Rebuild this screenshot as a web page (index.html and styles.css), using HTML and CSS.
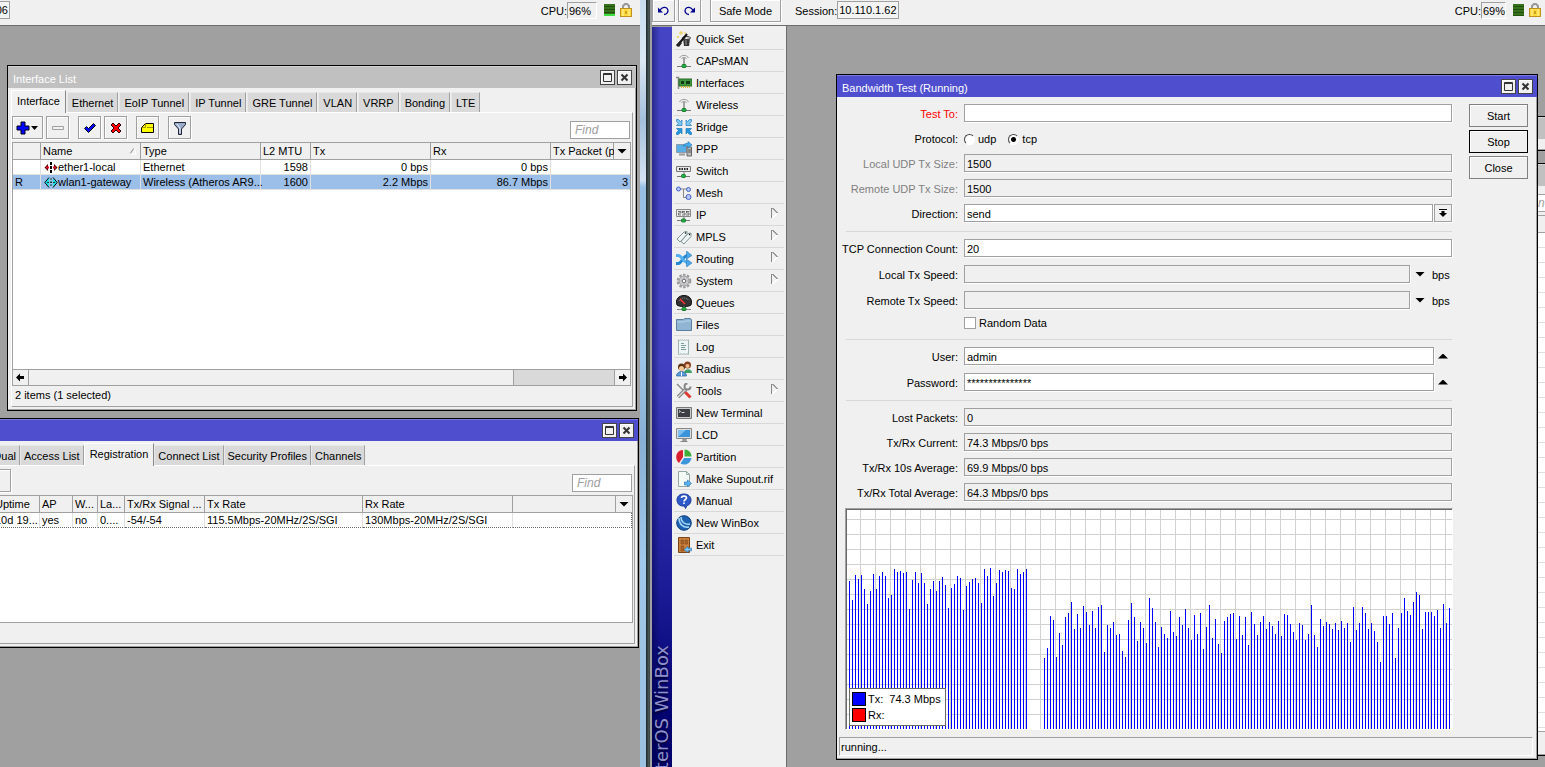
FILE: index.html
```html
<!DOCTYPE html>
<html lang="en">
<head>
    <meta charset="UTF-8">
    <meta name="viewport" content="width=device-width, initial-scale=1.0">
    <title>RouterOS WinBox</title>
    <link rel="stylesheet" href="styles.css">
</head>
<body>

    <div class="screen">

        <!-- left WinBox -->
        <section class="app">
            <header class="topbar">
                <input class="session session-cut" type="text" value="06" aria-label="Session" readonly>
                <div class="status">
                    <span>CPU:</span><span class="cpu">96%</span>
                    <span class="meter low"></span>
                    <svg class="lock" viewBox="0 0 12 14"><path d="M3 7V3l2-2h2l2 2v4" fill="none" stroke="#999" stroke-width="2"/><rect x="0.5" y="5.5" width="11" height="8" fill="#ffd83c" stroke="#c09020"/><path d="M3 6v7M9 6v7" stroke="#fff3a0"/><path d="M6 8v3" stroke="#9a6a10"/></svg>
                </div>
            </header>
            <main class="desktop">
                <div class="window interfaces inactive">
                    <div class="title"><span>Interface List</span>
                        <button class="winbtn" aria-label="Maximize"><svg viewBox="0 0 11 11"><path d="M1.5 1.5h8v8h-8zM1 2.5h9" fill="none" stroke="#333"/></svg></button>
                        <button class="winbtn" aria-label="Close"><svg viewBox="0 0 11 11"><path d="M2.500 2.500l6 6M8.500 2.500l-6 6" stroke="#333" stroke-width="2"/></svg></button>
                    </div>
                    <div class="body">
                        <nav class="tabs">
                            <button class="tab active">Interface</button>
                            <button class="tab">Ethernet</button>
                            <button class="tab">EoIP Tunnel</button>
                            <button class="tab">IP Tunnel</button>
                            <button class="tab">GRE Tunnel</button>
                            <button class="tab">VLAN</button>
                            <button class="tab">VRRP</button>
                            <button class="tab">Bonding</button>
                            <button class="tab">LTE</button>
                        </nav>
                        <div class="panel">
                            <div class="toolbar">
                                <button class="tool add" aria-label="Add"><svg width="24" height="14" viewBox="0 0 24 14"><path d="M5 1h4v4h4v4H9v4H5V9H1V5h4z" fill="#00f" stroke="#001"/><path d="M15 5h7l-3.500 4z"/></svg></button>
                                <button class="tool" aria-label="Remove"><svg width="14" height="14" viewBox="0 0 14 14"><path d="M1.500 5.500h11v3h-11z" fill="#f0f0f0" stroke="#a0a0a0"/></svg></button>
                                <button class="tool spaced" aria-label="Enable"><svg width="14" height="14" viewBox="0 0 14 14"><path d="M1.500 7.500l2-2 2 2 5-5 2 2-7 7z" fill="#00f" stroke="#001"/></svg></button>
                                <button class="tool" aria-label="Disable"><svg width="14" height="14" viewBox="0 0 14 14"><path d="M2 4l2-2 3 3 3-3 2 2-3 3 3 3-2 2-3-3-3 3-2-2 3-3z" fill="#f00" stroke="#300"/></svg></button>
                                <button class="tool spaced" aria-label="Comment"><svg width="14" height="14" viewBox="0 0 14 14"><path d="M4.500 2.500h8v9h-12v-5z" fill="#ff0" stroke="#000"/><path d="M.5 6.500h4v-4M6 6.500h6" fill="none" stroke="#a09000"/></svg></button>
                                <button class="tool spaced" aria-label="Filter"><svg width="14" height="14" viewBox="0 0 14 14"><path d="M1.500 1.500h11v2L8.500 8v5.500h-3V8l-4-4.500z" fill="#9aaccc" stroke="#223"/><path d="M4 3l3 4v5" fill="none" stroke="#e8f0ff"/></svg></button>
                                <input class="find" type="text" placeholder="Find" aria-label="Find">
                            </div>
                            <div class="list tall">
                                <table>
                                    <colgroup><col class="w28"><col class="w100"><col class="w120"><col class="w50"><col class="w120"><col class="w120"><col><col class="w16"></colgroup>
                                    <thead>
                                        <tr><th></th><th>Name<svg class="sort" width="8" height="8" viewBox="0 0 8 8"><path d="M1 7l4-6" stroke="#888"/><path d="M5 1l2 6H1" fill="none" stroke="#fff"/></svg></th><th>Type</th><th>L2 MTU</th><th>Tx</th><th>Rx</th><th>Tx Packet (p</th><th class="pick"><span class="down"></span></th></tr>
                                    </thead>
                                    <tbody>
                                        <tr><td></td><td class="name"><svg width="14" height="11" viewBox="0 0 14 11"><path d="M4 2v7L.5 5.500zM10 2v7l3.500-3.500z" fill="#500008"/><path d="M2 5.500h3M9 5.500h3" stroke="#e01020" stroke-width="2"/><path d="M7 0v11" stroke="#000" stroke-width="2" stroke-dasharray="3 1"/></svg>ether1-local</td><td>Ethernet</td><td class="num">1598</td><td class="num">0 bps</td><td class="num">0 bps</td><td colspan="2"></td></tr>
                                        <tr class="selected"><td>R</td><td class="name"><svg width="14" height="11" viewBox="0 0 14 11"><path d="M5 .5L.8 5.500 5 10.500M9 .5l4.200 5L9 10.500" fill="#20e0e8" stroke="#000"/><path d="M7 1v9M3 5.500h8" stroke="#043" stroke-dasharray="2 1"/></svg>wlan1-gateway</td><td>Wireless (Atheros AR9...</td><td class="num">1600</td><td class="num">2.2 Mbps</td><td class="num">86.7 Mbps</td><td class="num" colspan="2">3</td></tr>
                                    </tbody>
                                </table>
                                <div class="scroll">
                                    <button class="step" aria-label="Scroll left"><svg width="9" height="9" viewBox="0 0 9 9"><path d="M0 4.500L4 .5V3h4v3H4v2.500z"/></svg></button>
                                    <div class="thumb"></div>
                                    <div class="trough"></div>
                                    <button class="step" aria-label="Scroll right"><svg width="9" height="9" viewBox="0 0 9 9"><path d="M9 4.500L5 .5V3H1v3h4v2.500z"/></svg></button>
                                </div>
                            </div>
                            <div class="count">2 items (1 selected)</div>
                        </div>
                    </div>
                </div>

                <div class="window wireless">
                    <div class="title"><span></span>
                        <button class="winbtn" aria-label="Maximize"><svg viewBox="0 0 11 11"><path d="M1.5 1.5h8v8h-8zM1 2.5h9" fill="none" stroke="#333"/></svg></button>
                        <button class="winbtn" aria-label="Close"><svg viewBox="0 0 11 11"><path d="M2.500 2.500l6 6M8.500 2.500l-6 6" stroke="#333" stroke-width="2"/></svg></button>
                    </div>
                    <div class="body">
                        <nav class="tabs">
                            <button class="tab first">Nstreme Dual</button>
                            <button class="tab">Access List</button>
                            <button class="tab active">Registration</button>
                            <button class="tab">Connect List</button>
                            <button class="tab">Security Profiles</button>
                            <button class="tab">Channels</button>
                        </nav>
                        <div class="panel">
                            <div class="toolbar">
                                <button class="tool reset" aria-label="Reset"></button>
                                <input class="find" type="text" placeholder="Find" aria-label="Find">
                            </div>
                            <div class="list short">
                                <table>
                                    <colgroup><col class="w57"><col class="w47"><col class="w33"><col class="w25"><col class="w27"><col class="w80"><col class="w158"><col class="w150"><col><col class="w16"></colgroup>
                                    <thead>
                                        <tr><th></th><th>Uptime</th><th>AP</th><th>W...</th><th>La...</th><th>Tx/Rx Signal ...</th><th>Tx Rate</th><th>Rx Rate</th><th></th><th class="pick"><span class="down"></span></th></tr>
                                    </thead>
                                    <tbody>
                                        <tr class="focused"><td></td><td>10d 19...</td><td>yes</td><td>no</td><td>0....</td><td>-54/-54</td><td>115.5Mbps-20MHz/2S/SGI</td><td>130Mbps-20MHz/2S/SGI</td><td colspan="2"></td></tr>
                                    </tbody>
                                </table>
                            </div>
                            <div class="count"></div>
                        </div>
                    </div>
                </div>
            </main>
        </section>

        <div class="frame"></div>

        <!-- right WinBox -->
        <section class="app">
            <header class="topbar main">
                <button class="tool" aria-label="Undo"><svg width="13" height="12" viewBox="0 0 13 12"><path d="M3 5C5 2 9 1.500 10.500 4S10 9.500 7 9.500" fill="none" stroke="#000090" stroke-width="1.300"/><path d="M1 2.500v5h5z" fill="#000090"/></svg></button>
                <button class="tool" aria-label="Redo"><svg width="13" height="12" viewBox="0 0 13 12"><path d="M10 5C8 2 4 1.500 2.500 4S3 9.500 6 9.500" fill="none" stroke="#000090" stroke-width="1.300"/><path d="M12 2.500v5H7z" fill="#000090"/></svg></button>
                <button class="tool safe">Safe Mode</button>
                <label for="session">Session:</label>
                <input class="session" id="session" type="text" value="10.110.1.62" readonly>
                <div class="status">
                    <span>CPU:</span><span class="cpu">69%</span>
                    <span class="meter"></span>
                    <svg class="lock" viewBox="0 0 12 14"><path d="M3 7V3l2-2h2l2 2v4" fill="none" stroke="#999" stroke-width="2"/><rect x="0.5" y="5.5" width="11" height="8" fill="#ffd83c" stroke="#c09020"/><path d="M3 6v7M9 6v7" stroke="#fff3a0"/><path d="M6 8v3" stroke="#9a6a10"/></svg>
                </div>
            </header>
            <div class="workspace">
                <div class="brand"><span>RouterOS WinBox</span></div>
                <nav class="menu">
                    <a href="#"><svg viewBox="0 0 16 16"><path d="M7 7h7l-1 8H8z" fill="#333"/><ellipse cx="10.500" cy="7" rx="4" ry="1.500" fill="#ddd" stroke="#333"/><path d="M1 15l10-12" stroke="#111" stroke-width="2"/><path d="M0 14l4-4 2 2-3 4z" fill="#222"/><path d="M5 0v4M3 2h4M9 1v2M2 5v2M1 6h2" stroke="#e8c840"/><path d="M10 9v5" stroke="#999"/></svg>Quick Set</a>
                    <a href="#"><svg viewBox="0 0 16 16"><path d="M3.500 5C5 1.500 11 1.500 12.500 5M5.500 6C6 4 10 4 10.500 6" fill="none" stroke="#999"/><path d="M8 5v7" stroke="#888" stroke-width="1.500"/><path d="M1 13.500h14" stroke="#777"/><rect x="6" y="11.500" width="4" height="3" rx="1" fill="#25b045" stroke="#167a2d"/></svg>CAPsMAN</a>
                    <a href="#"><svg viewBox="0 0 16 16"><path d="M0 2.500h2.500V14" fill="none" stroke="#888" stroke-width="1.500"/><path d="M3 4h13v7H3z" fill="#3f9a3f" stroke="#276b28"/><path d="M5 6h3v3H5zM10 6h4v3h-4z" fill="#153a18"/><path d="M5 12h9" stroke="#d8b83c" stroke-width="2" stroke-dasharray="1 1"/></svg>Interfaces</a>
                    <a href="#"><svg viewBox="0 0 16 16"><path d="M3.500 5C5 1.500 11 1.500 12.500 5M5.500 6C6 4 10 4 10.500 6" fill="none" stroke="#999"/><path d="M8 5v7" stroke="#888" stroke-width="1.500"/><path d="M1 13.500h14" stroke="#777"/><rect x="6" y="11.500" width="4" height="3" rx="1" fill="#25b045" stroke="#167a2d"/></svg>Wireless</a>
                    <a href="#"><svg viewBox="0 0 16 16"><g stroke="#1f78b8" stroke-width=".7"><path d="M.5.5l2 0 2 2L6 1v5.500H.5L2.500 4.500l-2-2zM15.500.5v2l-2 2 2 2H10V1l1.500 1.500 2-2z" fill="#7cc8f2"/><path d="M.5 15.500v-2l2-2-2-2H6V15l-1.500-1.500-2 2zM15.500 15.500h-2l-2-2L10 15V9.500h5.500l-2 2 2 2z" fill="#2596dc"/></g></svg>Bridge</a>
                    <a href="#"><svg viewBox="0 0 16 16"><path d="M.5 3.500h10v8H.5z" fill="#5aaee6" stroke="#8a9aaa"/><path d="M3 13.500h6" stroke="#999" stroke-width="2"/><path d="M11 6h4.500v9H11z" fill="#bbb" stroke="#666"/><path d="M12 9h3M12 11h3" stroke="#555"/><path d="M7 5c1-2 3-3 5-2.500V.5l4 3.500-4 3V5z" fill="#49b0f0" stroke="#2072b0" stroke-width=".6"/></svg>PPP</a>
                    <a href="#"><svg viewBox="0 0 16 16"><path d="M.5 3.500h14v5H.5z" fill="#e8e8e8" stroke="#777"/><path d="M3 6h10" stroke="#222" stroke-width="2" stroke-dasharray="1.500 1"/><path d="M8 9v3M1 13.500h13" stroke="#777"/><rect x="5.500" y="11.500" width="4" height="3" rx="1" fill="#25b045" stroke="#167a2d"/></svg>Switch</a>
                    <a href="#"><svg viewBox="0 0 16 16"><path d="M4 4h9M7.500 4v8.500H12" fill="none" stroke="#888"/><g fill="#b8c8ff" stroke="#4060c8"><circle cx="2.500" cy="4" r="2"/><circle cx="12.500" cy="4.500" r="2"/><circle cx="12.500" cy="12" r="2.500"/></g></svg>Mesh</a>
                    <a href="#" class="sub"><svg viewBox="0 0 16 16"><path d="M.5 2.500h14v7H.5z" fill="#eee" stroke="#888"/><path d="M2 4.500h3v1.500H2.500V8H5M6 4.500h3M6.500 4v2H9v2H6M10 4.500h3.500M10.500 4v2H13v2h-3" fill="none" stroke="#555" stroke-width=".8"/><path d="M8 10v3M1 13.500h13" stroke="#777"/><rect x="5.500" y="12" width="4" height="3" rx="1" fill="#25b045" stroke="#167a2d"/></svg>IP</a>
                    <a href="#" class="sub"><svg viewBox="0 0 16 16"><path d="M1 10l7-7 3-.500v3L4 13zM5 12.500l7-8 3-.500v3.500L8 15z" fill="#eef4f4" stroke="#7f9496"/><circle cx="9.500" cy="4" r=".7"/><circle cx="13.500" cy="5.500" r=".7"/></svg>MPLS</a>
                    <a href="#" class="sub"><svg viewBox="0 0 16 16"><path d="M0 12.500h2.500c3 0 5-8 9-8" fill="none" stroke="#2788d0" stroke-width="3"/><path d="M0 4.500h2.500c3 0 5 7 9 7" fill="none" stroke="#52b0ee" stroke-width="3"/><path d="M10.500 0l5.500 4.500L10.500 8zM10.500 8l5.500 4-5.500 4z" fill="#4aa8e8" stroke="#2070b0" stroke-width=".5"/></svg>Routing</a>
                    <a href="#" class="sub"><svg viewBox="0 0 16 16"><circle cx="8" cy="8" r="6.300" fill="none" stroke="#999" stroke-width="2" stroke-dasharray="2.500 1.500"/><circle cx="8" cy="8" r="5" fill="#d0d0d4" stroke="#999"/><path d="M8 4v8M4 8h8M5.500 5.500l5 5M10.500 5.500l-5 5" stroke="#aaa"/><circle cx="8" cy="8" r="1.700" fill="#fff" stroke="#777"/></svg>System</a>
                    <a href="#"><svg viewBox="0 0 16 16"><path d="M1 10C-1 4 3 .5 8 .5S17 4 15 10c-2 2-12 2-14 0z" fill="#333" stroke="#111"/><path d="M3 6c2-4 8-4 10 0" fill="none" stroke="#888" stroke-dasharray="1 1"/><path d="M4 4l5 5" stroke="#f33" stroke-width="1.500"/><path d="M8 11v3M1 14.500h14" stroke="#888"/><rect x="6" y="12.500" width="4" height="3" rx="1" fill="#25b045" stroke="#167a2d"/></svg>Queues</a>
                    <a href="#"><svg viewBox="0 0 16 16"><path d="M.5 13.500v-11h7l1.500-1h5l1.500 1v11z" fill="#8fb4d4" stroke="#5a7f9f"/><path d="M1 5h7l1-1h6" fill="none" stroke="#b8d4ea"/></svg>Files</a>
                    <a href="#"><svg viewBox="0 0 16 16"><path d="M2.500 15.500V.8l1 .7 1-.7 1 .7 1-.7 1 .7 1-.7 1 .7 1-.7 1 .7 1-.7v14.700l-1.500-.8-1.500.8-1.500-.8-1.500.8-1.500-.8-1.500.8z" fill="#eef5f5" stroke="#a0b4b4"/><path d="M5 4.500h3M5 6.500h5M5 8.500h4M5 10.500h5" stroke="#7c9c9c"/></svg>Log</a>
                    <a href="#"><svg viewBox="0 0 16 16"><path d="M8 12c0-5 8-5 8 0z" fill="#3fa068"/><circle cx="11.500" cy="4" r="3.500" fill="#8a4020"/><circle cx="11.500" cy="5" r="2" fill="#f0c090"/><path d="M.5 15c0-6 10-6 10 0z" fill="#5a9ad8" stroke="#2a62a0" stroke-width=".7"/><circle cx="5.500" cy="6" r="3.500" fill="#5a3010"/><circle cx="5.500" cy="7.500" r="2.500" fill="#f4c898"/><path d="M5.500 11v4" stroke="#fff"/></svg>Radius</a>
                    <a href="#" class="sub"><svg viewBox="0 0 16 16"><path d="M1 1l8 8" stroke="#888" stroke-width="1.500"/><path d="M9 9l5.500 5.500" stroke="#e03a30" stroke-width="3"/><path d="M2 14l8-8" stroke="#808080" stroke-width="3.500"/><path d="M2 14l8-8" stroke="#d8d8d8" stroke-width="1.500"/><path d="M14.500 3.500a3 3 0 1 1-3-3" fill="none" stroke="#888" stroke-width="2"/></svg>Tools</a>
                    <a href="#"><svg viewBox="0 0 16 16"><path d="M.5 2.500h15v11H.5z" fill="#ccc" stroke="#777"/><path d="M2 4h12v8H2z" fill="#3c4046"/><path d="M3 5.500l1.500 1L3 7.500M5.500 7.500h3" fill="none" stroke="#fff" stroke-width=".8"/></svg>New Terminal</a>
                    <a href="#"><svg viewBox="0 0 16 16"><path d="M.5 1.500h15v10H.5z" fill="#ddd" stroke="#888"/><path d="M2 3h12v7H2z" fill="#3a92d8"/><path d="M2 3h8l-8 7z" fill="#7cc0f0"/><path d="M7 12h3v2H7zM4.500 14.500h7" fill="#aaa" stroke="#888"/></svg>LCD</a>
                    <a href="#"><svg viewBox="0 0 16 16"><path d="M7 1v7l-4 6C-2 10 0 1 7 1z" fill="#d82030"/><path d="M8.500.5c4 0 7 3 7 7h-7z" fill="#3fae3a"/><path d="M8 9h7.500c-1 6-7 8-11 5.500z" fill="#3c96dc"/></svg>Partition</a>
                    <a href="#"><svg viewBox="0 0 16 16"><path d="M2.500.5h8l3 3v12h-11z" fill="#f4faf6" stroke="#93a8a4"/><path d="M10.500.5v3h3" fill="none" stroke="#93a8a4"/><path d="M8.500 11h3V9l4 3.500-4 3V14h-3z" fill="#5ab4f0" stroke="#2878b8" stroke-width=".7"/></svg>Make Supout.rif</a>
                    <a href="#"><svg viewBox="0 0 16 16"><path d="M8 1c4 0 7 2.500 7 6s-2 5-4 5.500L9.500 15.500 8.500 13C4 13.500 1 11 1 7s3-6 7-6z" fill="#2c58c8" stroke="#1c3c98"/><path d="M5.500 5c0-2.500 5-2.500 5 0 0 1.500-2.500 1.500-2.500 3.500M8 9.500v1.500" fill="none" stroke="#fff" stroke-width="1.600"/></svg>Manual</a>
                    <a href="#"><svg viewBox="0 0 16 16"><circle cx="8" cy="8" r="7.300" fill="#1c62b0" stroke="#124080"/><path d="M3 3c0 6 4 10 10 9M5 2c0 5 4 8 9 7" fill="none" stroke="#a8d8f8" stroke-width="1.500"/></svg>New WinBox</a>
                    <a href="#"><svg viewBox="0 0 16 16"><path d="M2.500.5h11v15h-11z" fill="#c8803c" stroke="#7c4414"/><path d="M5 3h2.500v4H5zM9 3h2.500v4H9zM5 9h2.500v5H5z" fill="#a8622a" stroke="#8a4e1c" stroke-width=".6"/><path d="M15.500 11.200H12V9.500l-4 3 4 3v-1.700h3.500z" fill="#7cc4f4" stroke="#2a78b4" stroke-width=".7"/></svg>Exit</a>
                </nav>
                <main class="desktop">
                    <div class="window back top"><div class="title"></div></div>
                    <div class="window back bottom">
                        <div class="title"></div>
                        <div class="ghost-find">ne</div>
                        <div class="ghost-head"></div>
                        <div class="ghost-rows"></div>
                    </div>

                    <div class="window bandwidth">
                        <div class="title"><span>Bandwidth Test (Running)</span>
                            <button class="winbtn" aria-label="Maximize"><svg viewBox="0 0 11 11"><path d="M1.5 1.5h8v8h-8zM1 2.5h9" fill="none" stroke="#333"/></svg></button>
                            <button class="winbtn" aria-label="Close"><svg viewBox="0 0 11 11"><path d="M2.500 2.500l6 6M8.500 2.500l-6 6" stroke="#333" stroke-width="2"/></svg></button>
                        </div>
                        <div class="content">
                            <form class="fields">
                                <div class="group">
                                    <div class="row"><label class="red" for="to">Test To:</label><input id="to" type="text"></div>
                                    <div class="row"><span class="caption">Protocol:</span>
                                        <label class="choice"><input type="radio" name="protocol">udp</label>
                                        <label class="choice"><input type="radio" name="protocol" checked>tcp</label>
                                    </div>
                                    <div class="row"><label class="dim" for="ludp">Local UDP Tx Size:</label><input id="ludp" type="text" value="1500" readonly></div>
                                    <div class="row"><label class="dim" for="rudp">Remote UDP Tx Size:</label><input id="rudp" type="text" value="1500" readonly></div>
                                    <div class="row"><label for="dir">Direction:</label><select id="dir"><option>send</option><option>receive</option><option>both</option></select><button type="button" class="drop" aria-label="Choose direction"><svg width="10" height="10" viewBox="0 0 10 10"><path d="M1 1.500h8" stroke="#000"/><path d="M3.500 3h3v2H9L5 9 1 5h2.500z"/></svg></button></div>
                                </div>
                                <div class="group loose">
                                    <div class="row"><label for="count">TCP Connection Count:</label><input id="count" type="text" value="20"></div>
                                    <div class="row"><label for="lspeed">Local Tx Speed:</label><input id="lspeed" type="text" readonly><button type="button" class="arrow" aria-label="Set local speed"><span class="down"></span></button><span class="unit">bps</span></div>
                                    <div class="row"><label for="rspeed">Remote Tx Speed:</label><input id="rspeed" type="text" readonly><button type="button" class="arrow" aria-label="Set remote speed"><span class="down"></span></button><span class="unit">bps</span></div>
                                    <div class="row check"><label class="choice"><input type="checkbox">Random Data</label></div>
                                </div>
                                <div class="group loose">
                                    <div class="row"><label for="user">User:</label><input id="user" type="text" value="admin"><button type="button" class="arrow wide" aria-label="Clear user"><span class="up"></span></button></div>
                                    <div class="row"><label for="pass">Password:</label><input id="pass" type="text" value="***************"><button type="button" class="arrow wide" aria-label="Clear password"><span class="up"></span></button></div>
                                </div>
                                <div class="group">
                                    <div class="row"><label for="lost">Lost Packets:</label><input id="lost" type="text" value="0" readonly></div>
                                    <div class="row"><label for="cur">Tx/Rx Current:</label><input id="cur" type="text" value="74.3 Mbps/0 bps" readonly></div>
                                    <div class="row"><label for="avg">Tx/Rx 10s Average:</label><input id="avg" type="text" value="69.9 Mbps/0 bps" readonly></div>
                                    <div class="row"><label for="total">Tx/Rx Total Average:</label><input id="total" type="text" value="64.3 Mbps/0 bps" readonly></div>
                                </div>
                                <div class="graph">
                                    <div class="bars" id="bars"></div>
                                    <div class="legend">
                                        <div><i class="swatch tx"></i>Tx:<span>74.3 Mbps</span></div>
                                        <div><i class="swatch rx"></i>Rx:</div>
                                    </div>
                                </div>
                            </form>
                            <div class="actions">
                                <button>Start</button>
                                <button class="default">Stop</button>
                                <button>Close</button>
                            </div>
                        </div>
                        <div class="running">running...</div>
                    </div>
                </main>
            </div>
        </section>
    </div>

    <script>
        // Tx history, one sample per bar, zero where the test was paused
        const samples = [
            148,129,154,150,154,140,125,138,155,140,153,157,153,131,134,160,157,158,156,157,
            120,149,157,146,156,146,125,140,148,138,148,152,144,121,141,145,153,151,119,143,
            147,150,151,146,126,160,153,161,133,146,159,157,159,158,141,140,160,155,157,160,
            0,0,0,0,0,
            71,81,113,109,72,96,84,112,116,127,100,115,101,123,117,104,118,101,122,124,
            77,104,101,107,94,95,78,72,109,126,112,88,107,101,86,131,121,107,82,102,
            95,91,118,97,93,112,104,120,101,89,114,95,116,80,102,124,91,110,85,76,
            108,112,115,116,90,113,94,112,84,117,105,94,107,113,100,107,103,95,108,93,
            115,114,105,97,89,106,104,89,95,124,94,82,110,103,107,105,100,106,99,108,
            101,106,87,122,99,106,122,116,100,106,98,87,67,113,113,105,116,71,101,116,
            131,118,114,127,137,134,100,117,117,117,113,119,101,125,106,121
        ];
        const bars = document.getElementById('bars');
        samples.forEach(value => {
            const bar = document.createElement('i');
            bar.style.height = value + 'px';
            bars.appendChild(bar);
        });
    </script>
</body>
</html>
```

FILE: styles.css
```css
* {
    box-sizing: border-box;
}
body {
    margin: 0;
    overflow: hidden;
    background: #a0a0a0;
    color: #000;
    font-family: "Liberation Sans", Arial, sans-serif;
    font-size: 11px;
    line-height: 14px;
}
button, input, select {
    margin: 0;
    padding: 0;
    border: 1px solid #a0a0a0;
    border-radius: 0;
    background: #f0f0f0;
    color: #000;
    font: inherit;
    outline: none;
}
svg {
    display: block;
    flex: none;
}
.screen {
    display: grid;
    grid-template-columns: 640fr 12px 893fr;
    height: 100vh;
}
.app {
    display: flex;
    flex-direction: column;
    min-width: 0;
    overflow: hidden;
}
.frame {
    background:
        linear-gradient(to right, transparent 6px, #1c2628 6px, #4c5a5a 9px, #30383a 10px, #a0a0a0 10px),
        linear-gradient(#c8dcf0, #dce8f4 60px, #a4c0dc 120px, #d4e4f4 180px, #98c0e4 187px, #9cc4e6 360px, #88b0d4 440px, #a0c8ea 560px, #9cc0e0);
}
.desktop {
    position: relative;
    flex: 1;
    min-width: 0;
    overflow: hidden;
    background: #a0a0a0;
}

/* top bars */
.topbar {
    display: flex;
    align-items: flex-start;
    height: 26px;
    border-bottom: 1px solid #6e6e6e;
    background: #f0f0f0;
}
.topbar label {
    margin: 4px 0 0 14px;
}
.session {
    width: 62px;
    height: 18px;
    margin-top: 1px;
    padding: 0 1px;
    background: #f4f4f4;
}
.session-cut {
    margin-left: -52px;
    text-align: right;
}
.status {
    display: flex;
    align-items: flex-start;
    margin-left: auto;
    padding: 4px 8px 0 0;
}
.main .status {
    padding-right: 4px;
}
.cpu {
    width: 30px;
    height: 17px;
    margin-top: -2px;
    padding: 1px;
    border: 1px solid #a0a0a0;
    border-right-color: #fff;
    border-bottom-color: #fff;
}
.main .cpu {
    width: 25px;
}
.meter {
    width: 11px;
    height: 12px;
    margin: 0 5px 0 7px;
    background: repeating-linear-gradient(#35701a 0 2px, #245010 2px 3px);
}
.meter.low {
    border-bottom: 2px solid #40e040;
}
.lock {
    width: 12px;
    height: 14px;
    margin-top: -1px;
}
.main .tool {
    height: 22px;
    margin-right: 3px;
    border-top: 0;
}
.main .safe {
    width: 71px;
    margin: 0 0 0 6px;
}

/* toolbar buttons */
.tool {
    display: flex;
    align-items: center;
    justify-content: center;
    width: 23px;
    height: 23px;
    box-shadow: 1px 1px #fff, inset 1px 1px #fff;
}
.tool.add {
    width: 31px;
}
.tool.spaced {
    margin-left: 6px;
}
.tool.reset {
    width: 76px;
}

/* windows */
.window {
    position: absolute;
    border: 1px solid #000;
    background: #f0f0f0;
    box-shadow: inset -1px -1px #a0a0a0;
}
.interfaces {
    top: 39px;
    left: 7px;
    right: 3px;
}
.wireless {
    top: 392px;
    left: -70px;
    right: 1px;
}
.bandwidth {
    top: 48px;
    left: 49px;
    right: 7px;
}
.title {
    display: flex;
    align-items: center;
    gap: 2px;
    height: 22px;
    padding: 0 4px 0 5px;
    border-top: 1px solid #7c7ce0;
    background: #4e4ecf;
    color: #fff;
}
.title span {
    flex: 1;
    padding-top: 3px;
}
.inactive .title, .back .title {
    border-top-color: #d4d4d4;
    background: #c0c0c0;
}
.winbtn {
    display: flex;
    align-items: center;
    justify-content: center;
    width: 15px;
    height: 15px;
    border-color: #444;
    box-shadow: inset 1px 1px #fff;
}
.winbtn svg {
    width: 11px;
    height: 11px;
}
.body {
    padding: 0 3px 3px;
}
.tabs {
    display: flex;
    align-items: flex-end;
    height: 24px;
}
.interfaces .tabs {
    gap: 1px;
}
.tab {
    height: 20px;
    padding: 0 3px;
    border: 1px solid #e8e8e8;
    border-right-color: #a0a0a0;
    border-bottom: 0;
    background: #d9d9d9;
    white-space: nowrap;
}
.interfaces .tab {
    padding: 0 4px;
}
.tab.active {
    position: relative;
    height: 23px;
    margin-bottom: -1px;
    padding: 0 5px 3px;
    border-color: #fff;
    border-right-color: #888;
    background: #f0f0f0;
}
.tab.first {
    width: 86px;
    text-align: right;
}
.panel {
    padding-right: 1px;
    border: 1px solid #fff;
    border-right-color: #a0a0a0;
    border-bottom-color: #a0a0a0;
}
.toolbar {
    display: flex;
    gap: 3px;
    padding: 3px 1px 3px 0;
}
.find {
    align-self: flex-end;
    width: 60px;
    height: 18px;
    margin-left: auto;
    padding: 0 4px;
    background: #fff;
    font-size: 12px;
}
.find::placeholder {
    color: #a0a0a0;
    font-style: italic;
}
.list {
    display: flex;
    flex-direction: column;
    justify-content: space-between;
    border: 1px solid #a0a0a0;
    background: #fff;
}
.tall {
    height: 244px;
}
.short {
    height: 128px;
}
table {
    width: 100%;
    table-layout: fixed;
    border-spacing: 0;
}
.w16 { width: 16px; }
.w25 { width: 25px; }
.w27 { width: 27px; }
.w28 { width: 28px; }
.w33 { width: 33px; }
.w47 { width: 47px; }
.w50 { width: 50px; }
.w57 { width: 57px; }
.w80 { width: 80px; }
.w100 { width: 100px; }
.w120 { width: 120px; }
.w150 { width: 150px; }
.w158 { width: 158px; }
th, td {
    padding: 0 0 0 2px;
    border-right: 1px solid #e0e0e0;
    border-bottom: 1px solid #e0e0e0;
    text-align: left;
    font-weight: normal;
    white-space: nowrap;
}
th {
    position: relative;
    height: 17px;
    border-color: #a0a0a0;
    background: #f0f0f0;
}
td {
    height: 15px;
}
th:last-child, td:last-child {
    border-right: 0;
}
.sort {
    position: absolute;
    top: 4px;
    right: 3px;
}
.pick {
    padding: 0;
}
.pick .down {
    margin: auto;
}
.name svg {
    display: inline-block;
    margin-left: 1px;
    vertical-align: -2px;
}
.num {
    padding-right: 2px;
    text-align: right;
}
.selected td {
    background: #9cbfe9;
}
.focused td {
    border-bottom: 1px dotted #666;
}
.focused td:last-child {
    border-right: 1px dotted #666;
}
.down, .up {
    display: block;
    width: 10px;
    height: 5px;
    background: #000;
    clip-path: polygon(0 0, 100% 0, 50% 100%);
}
.up {
    clip-path: polygon(50% 0, 100% 100%, 0 100%);
}
.scroll {
    display: flex;
    height: 16px;
    border-top: 1px solid #a0a0a0;
}
.step {
    display: flex;
    align-items: center;
    justify-content: center;
    width: 16px;
    border-width: 0 1px 0 0;
}
.step:last-child {
    border-width: 0 0 0 1px;
}
.thumb {
    flex: 485;
    border-right: 1px solid #a0a0a0;
    background: #f0f0f0;
}
.trough {
    flex: 100;
    background: #d9d9d9;
}
.count {
    height: 20px;
    padding: 2px 3px;
}

/* main menu */
.workspace {
    display: flex;
    flex: 1;
    min-height: 0;
}
.brand {
    display: flex;
    justify-content: center;
    align-items: flex-end;
    width: 20px;
    margin-top: 1px;
    overflow: hidden;
    background: linear-gradient(to right, rgba(0, 0, 60, 0.4), transparent 8px), linear-gradient(#4444c4, #4040c0 45%, #1c1c98 75%, #00006c 95%);
}
.brand span {
    flex: none;
    margin-bottom: -36px;
    color: #9090c8;
    font-family: "DejaVu Sans", sans-serif;
    font-size: 18px;
    line-height: 20px;
    white-space: nowrap;
    text-shadow: -2px -1px 2px #000030;
    writing-mode: vertical-rl;
    transform: rotate(180deg);
}
.menu {
    width: 115px;
    padding: 2px 2px 0;
    border-right: 1px solid #6e6e6e;
    background: #f0f0f0;
}
.menu a {
    display: flex;
    align-items: center;
    gap: 4px;
    height: 22px;
    padding-left: 2px;
    border-bottom: 1px solid #d8d8d8;
    color: #000;
    text-decoration: none;
}
.menu svg {
    width: 16px;
    height: 16px;
}
.sub::after {
    content: "";
    width: 6px;
    height: 10px;
    margin: 0 6px 3px auto;
    border-left: 1px solid #888;
    background: linear-gradient(to top right, transparent 42%, #999 42%, #999 58%, transparent 58%) top / 6px 5px no-repeat, linear-gradient(to bottom right, transparent 42%, #fff 42%, #fff 58%, transparent 58%) bottom / 6px 5px no-repeat;
}

/* windows behind the bandwidth test */
.back {
    right: -40px;
    width: 200px;
}
.back.top {
    top: 90px;
    height: 35px;
}
.back.bottom {
    display: flex;
    flex-direction: column;
    top: 137px;
    height: 593px;
}
.back .title {
    flex: none;
}
.ghost-find {
    height: 18px;
    margin: 8px 0 3px;
    padding: 1px 0 0 151px;
    border: 1px solid #a0a0a0;
    background: #fff;
    color: #a0a0a0;
    font-size: 12px;
    font-style: italic;
}
.ghost-head {
    height: 18px;
    border: 1px solid #a0a0a0;
}
.ghost-rows {
    flex: 1;
    margin-bottom: 23px;
    border-bottom: 1px solid #a0a0a0;
    background: repeating-linear-gradient(#fff 0 14px, #e0e0e0 14px 15px);
}

/* bandwidth test */
.content {
    display: flex;
    gap: 17px;
    padding: 7px 9px 0;
}
.fields {
    flex: 1;
    min-width: 0;
}
.group {
    display: flex;
    flex-direction: column;
    gap: 7px;
}
.group.loose {
    gap: 8px;
}
.group + .group {
    margin-top: 9px;
    padding-top: 7px;
    border-top: 1px solid #d8d8d8;
}
.row {
    display: flex;
    height: 18px;
}
.row > label:first-child, .caption {
    display: flex;
    flex: none;
    justify-content: flex-end;
    width: 112px;
    margin-right: 6px;
    padding-top: 3px;
    white-space: nowrap;
}
.row .red {
    color: #f00;
}
.row .dim {
    color: #808080;
}
.row input[type="text"], .row select {
    flex: 1;
    min-width: 0;
    padding: 1px 2px 0;
    background: #fff;
    box-shadow: 1px 1px #fff;
    appearance: none;
}
.row input[readonly] {
    background: #f0f0f0;
}
.row .choice {
    display: flex;
    align-items: center;
    gap: 3px;
    margin-right: 12px;
    padding-top: 2px;
}
.row.check {
    height: 14px;
    margin-top: -1px;
    padding-left: 118px;
}
.row.check .choice {
    justify-content: flex-start;
    width: auto;
    padding: 0;
}
.choice input {
    width: 11px;
    height: 11px;
    background: #fff;
    appearance: none;
}
.choice input[type="radio"] {
    border: 1px solid #fff;
    border-top-color: #444;
    border-left-color: #444;
    border-radius: 50%;
}
.choice input[type="radio"]:checked {
    background: radial-gradient(circle, #000 2px, #fff 3px);
}
.choice input[type="checkbox"] {
    width: 12px;
    height: 12px;
}
.drop {
    display: flex;
    align-items: center;
    justify-content: center;
    width: 18px;
    margin-left: 1px;
    box-shadow: 1px 1px #fff;
}
.arrow {
    width: 10px;
    margin: 0 7px 0 5px;
    border: 0;
    background: none;
}
.arrow.wide {
    margin: 0 4px;
}
.unit {
    width: 20px;
    padding-top: 3px;
}
.graph {
    position: relative;
    height: 222px;
    margin: 7px -1px 0;
    padding-left: 2px;
    overflow: hidden;
    border: 1px solid #a0a0a0;
    border-right-color: #fff;
    border-bottom-color: #fff;
    background:
        linear-gradient(#696969, #696969) top / 100% 1px no-repeat,
        linear-gradient(#696969, #696969) left / 1px 100% no-repeat,
        repeating-linear-gradient(to right, transparent 0 14px, #d0d0d0 14px 15px),
        repeating-linear-gradient(transparent 0 10px, #d0d0d0 10px 11px, transparent 11px 15px) #fff;
}
.bars {
    display: flex;
    align-items: flex-end;
    gap: 2px;
    height: 220px;
    padding-left: 1px;
}
.bars i {
    flex: none;
    width: 1px;
    background: #00f;
}
.legend {
    position: absolute;
    left: 3px;
    bottom: 3px;
    width: 97px;
    padding: 2px;
    border: 1px solid #696969;
    background: #fff;
}
.legend div {
    display: flex;
    align-items: center;
    gap: 2px;
    height: 16px;
}
.legend span {
    margin-left: 4px;
}
.swatch {
    width: 14px;
    height: 14px;
    border: 1px solid #000;
}
.tx {
    background: #00f;
}
.rx {
    background: #f00;
}
.actions {
    display: flex;
    flex-direction: column;
    gap: 3px;
    width: 59px;
}
.actions button {
    height: 23px;
    border-color: #808080;
    box-shadow: inset 1px 1px #fff;
}
.actions .default {
    border-color: #000;
}
.running {
    height: 19px;
    margin: 7px 4px 3px 2px;
    padding: 2px 1px;
    border: 1px solid #a0a0a0;
    border-right-color: #fff;
    border-bottom-color: #fff;
}
```
